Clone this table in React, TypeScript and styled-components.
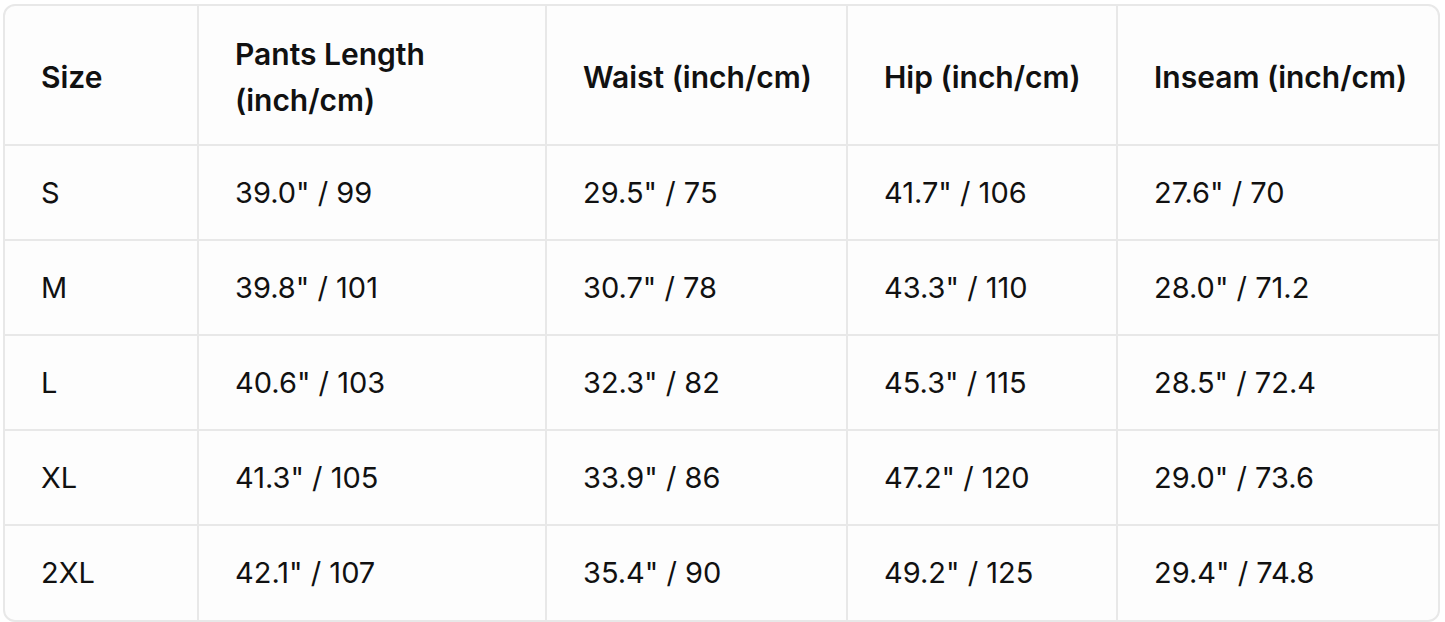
import React from "react";
import styled, { createGlobalStyle } from "styled-components";

const GlobalStyle = createGlobalStyle`
  html, body {
    margin: 0;
    padding: 0;
    background: #ffffff;
  }
  body {
    font-family: Inter, "Noto Sans", "Liberation Sans", sans-serif;
    color: #111111;
  }
`;

const headers = [
  "Size",
  "Pants Length (inch/cm)",
  "Waist (inch/cm)",
  "Hip (inch/cm)",
  "Inseam (inch/cm)",
];

const rows = [
  ["S", '39.0" / 99', '29.5" / 75', '41.7" / 106', '27.6" / 70'],
  ["M", '39.8" / 101', '30.7" / 78', '43.3" / 110', '28.0" / 71.2'],
  ["L", '40.6" / 103', '32.3" / 82', '45.3" / 115', '28.5" / 72.4'],
  ["XL", '41.3" / 105', '33.9" / 86', '47.2" / 120', '29.0" / 73.6'],
  ["2XL", '42.1" / 107', '35.4" / 90', '49.2" / 125', '29.4" / 74.8'],
];

const colWidths = [193, 348, 301, 270, 321];

export default function App() {
  return (
    <Page>
      <GlobalStyle />
      <Frame>
        <Table>
          <colgroup>
            {colWidths.map((w, i) => (
              <col key={i} style={{ width: w }} />
            ))}
          </colgroup>
          <thead>
            <tr>
              {headers.map((h, i) => (
                <HeadCell key={h} $narrow={i === 1}>
                  {h}
                </HeadCell>
              ))}
            </tr>
          </thead>
          <tbody>
            {rows.map((row, r) => (
              <tr key={row[0]}>
                {row.map((value, i) => (
                  <Cell key={i} $last={r === rows.length - 1}>
                    {value}
                  </Cell>
                ))}
              </tr>
            ))}
          </tbody>
        </Table>
      </Frame>
    </Page>
  );
}

const Page = styled.div`
  padding: 4px 5px 3px 3px;
`;

const Frame = styled.div`
  width: 1437px;
  border: 2px solid #e8e8e8;
  border-radius: 12px;
  overflow: hidden;
  background: #fdfdfd;
  box-sizing: border-box;
`;

const Table = styled.table`
  width: 100%;
  border-collapse: collapse;
  table-layout: fixed;
`;

const HeadCell = styled.th<{ $narrow?: boolean }>`
  height: 139px;
  padding: 4px 20px 0 36px;
  text-align: left;
  vertical-align: middle;
  font-size: 30px;
  font-weight: 600;
  line-height: 46px;
  border-bottom: 2px solid #e8e8e8;
  border-left: 2px solid #e8e8e8;
  box-sizing: border-box;
  ${(p) => (p.$narrow ? "padding-right: 80px;" : "")}

  &:first-child {
    border-left: none;
  }
`;

const Cell = styled.td<{ $last?: boolean }>`
  height: 95px;
  padding: 0 36px;
  text-align: left;
  vertical-align: middle;
  font-size: 29px;
  font-weight: 400;
  line-height: 40px;
  border-bottom: ${(p) => (p.$last ? "none" : "2px solid #e8e8e8")};
  border-left: 2px solid #e8e8e8;
  box-sizing: border-box;

  &:first-child {
    border-left: none;
  }
`;
